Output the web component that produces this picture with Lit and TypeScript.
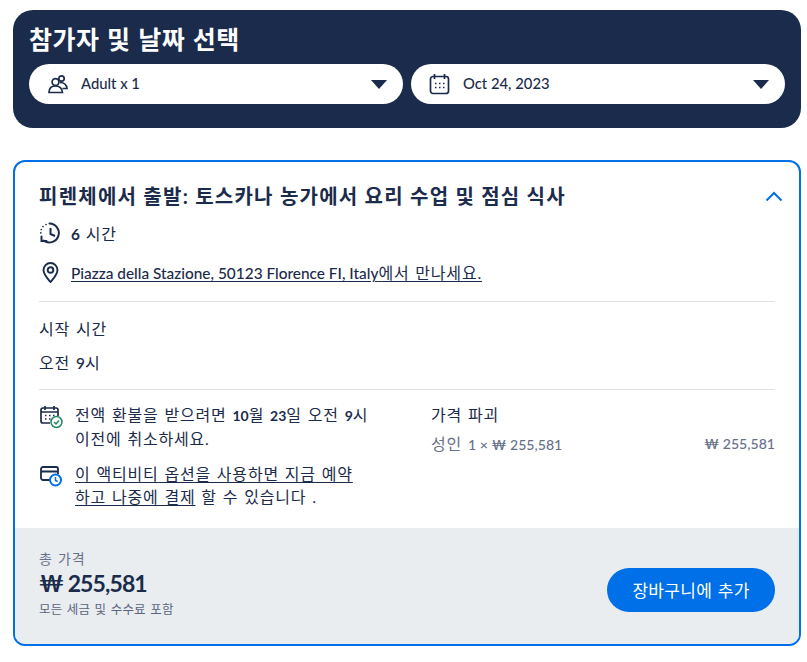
import { LitElement, html, css } from "lit";
import { customElement } from "lit/decorators.js";

const caret = html`<svg class="caret" width="16" height="9" viewBox="0 0 16 9"><path d="M0 0h16L8 9z" fill="#1b2b4b"/></svg>`;

@customElement("app-root")
export class AppRoot extends LitElement {
  static styles = css`
    :host { display: block; width: 807px; height: 662px; background: #fff; font-family: Lato, "Noto Sans CJK KR", sans-serif; color: #1b2b4b; font-size: 16px; letter-spacing: 0.8px; word-spacing: 1px; overflow: hidden; }
    .en { font-size: 15.4px; letter-spacing: 0; word-spacing: 0; font-weight: 500; }
    .wrap { padding: 10px 6px 0 13px; }
    .head { background: #1b2b4b; border-radius: 20px; height: 118px; box-sizing: border-box; padding: 12px 16px 0 16px; }
    .head h2 { margin: 0; font-size: 25px; line-height: 34px; height: 42px; font-weight: 700; color: #fff; letter-spacing: 0.5px; word-spacing: 1px; }
    .pills { display: flex; gap: 8px; }
    .pill { flex: 1; height: 40px; background: #fff; border-radius: 20px; display: flex; align-items: center; padding: 0 16px 0 18px; }
    .pill span { flex: 1; margin: 0 0 2px 12px; font-size: 14.8px; }
    .pill svg.ic { flex: none; }
    .card { margin-top: 32px; height: 486px; width: 788px; box-sizing: border-box; border: 2px solid #0070e8; border-radius: 12px; overflow: hidden; display: flex; flex-direction: column; }
    .body { flex: 1; padding: 0 24px; }
    .title { display: flex; justify-content: space-between; align-items: center; height: 68px; }
    .title h3 { margin: 0; font-size: 20px; font-weight: 700; line-height: 28px; letter-spacing: 1.25px; word-spacing: 0; }
    .title svg { margin-right: -8px; }
    .row { display: flex; align-items: center; gap: 11px; height: 24px; }
    .row.dur { margin-top: -9px; }
    .row.loc { margin-top: 15px; }
    .row a, .link { color: inherit; text-decoration: underline; text-underline-offset: 2px; }
    hr { border: 0; border-top: 1px solid #dfe2e6; margin: 0; }
    .hr1 { margin-top: 17px; }
    .start { height: 87px; box-sizing: border-box; padding-top: 15px; line-height: 24px; }
    .start p { margin: 0 0 10px; }
    .cols { display: flex; padding-top: 13px; }
    .left { width: 392px; }
    .right { flex: 1; }
    .note { display: flex; gap: 11px; line-height: 23px; }
    .note + .note { margin-top: 12px; }
    .note svg { flex: none; margin-top: 2px; }
    .note p { margin: 0; white-space: nowrap; }
    .note .en { font-size: 14px; font-weight: 700; }
    .break { line-height: 24px; }
    .line { display: flex; justify-content: space-between; line-height: 24px; margin-top: 5px; color: #68718a; }
    .line .en { font-size: 14.1px; }
    b { font-weight: 700; }
    .foot { height: 116px; background: #e9edf0; display: flex; justify-content: space-between; align-items: center; padding: 0 24px; }
    .sum { padding-bottom: 2px; }
    .lab { font-size: 14px; color: #68718a; line-height: 18px; }
    .total { font-size: 23px; font-weight: 700; line-height: 31px; letter-spacing: -0.9px; word-spacing: 0; }
    .tiny { font-size: 12.5px; color: #5c6580; line-height: 20px; margin-top: 1px; letter-spacing: 0.2px; }
    button { border: 0; width: 168px; height: 44px; border-radius: 22px; background: #0070e8; color: #fff; font: inherit; font-size: 17px; letter-spacing: 0.3px; word-spacing: 1px; margin-top: 7px; }
  `;

  render() {
    return html`<div class="wrap">
      <div class="head">
        <h2>참가자 및 날짜 선택</h2>
        <div class="pills">
          <div class="pill">
            <svg class="ic" width="22" height="20" viewBox="0 0 22 20" fill="none" stroke="#1b2b4b" stroke-width="1.7"><circle cx="8.500" cy="8" r="3.400"/><circle cx="14.500" cy="4.500" r="2.700"/><path d="M2 18.500c0-4.500 3-6.500 6.500-6.500s6.500 2 7 6.500zM13 8.500c4 0 6.500 2 7 6h-4.500"/></svg>
            <span class="en">Adult x 1</span>${caret}
          </div>
          <div class="pill">
            <svg class="ic" width="22" height="22" viewBox="0 0 22 22" fill="none" stroke="#1b2b4b" stroke-width="1.7"><rect x="1.500" y="3.500" width="18" height="17" rx="2.500"/><path d="M5.500 1V6M15.500 1V6"/><path d="M6 10.500h1.500M10 10.500h1.500M14 10.500h1.500M6 14.500h1.500M10 14.500h1.500M14 14.500h1.500" stroke-width="1.600"/></svg>
            <span class="en">Oct 24, 2023</span>${caret}
          </div>
        </div>
      </div>
      <div class="card">
        <div class="body">
          <div class="title">
            <h3>피렌체에서 출발: 토스카나 농가에서 요리 수업 및 점심 식사</h3>
            <svg width="18" height="11" viewBox="0 0 18 11" fill="none" stroke="#0070e8" stroke-width="2"><path d="M1.500 9.500L9 2l7.500 7.500"/></svg>
          </div>
          <div class="row dur">
            <svg width="22" height="22" viewBox="0 0 22 22" fill="none" stroke="#1b2b4b" stroke-width="2" stroke-linecap="round" style="margin-right:-1px"><path d="M10.500 1.500a9.500 9.500 0 1 1-6 17"/><path d="M11.500 6v6l4.500 2" stroke-linecap="butt"/><path d="M2.500 14.500v4.500h5"/><path d="M7 2.500h.01M4 4.500h.01M2.300 7.500h.01M1.800 10.800h.01" stroke-width="1.700"/></svg>
            <span><span class="en"><b>6</b></span> 시간</span>
          </div>
          <div class="row loc">
            <svg width="21" height="21" viewBox="0 0 21 21" fill="none" stroke="#1b2b4b" stroke-width="1.900" style="margin-left:1px;margin-right:-1px"><path d="M10.500 20c-3-3.500-7-7.500-7-12a7 7 0 0 1 14 0c0 4.500-4 8.500-7 12z"/><circle cx="10.500" cy="8" r="2.800"/></svg>
            <span><a href="#"><span class="en">Piazza della Stazione, 50123 Florence FI, Italy</span>에서 만나세요.</a></span>
          </div>
          <hr class="hr1" />
          <div class="start"><p>시작 시간</p><p>오전 <b class="en">9</b>시</p></div>
          <hr />
          <div class="cols">
            <div class="left">
              <div class="note">
                <svg width="25" height="25" viewBox="0 0 25 25" fill="none" stroke="#1b2b4b" stroke-width="1.700"><path d="M11 18H4a2 2 0 0 1-2-2V5a2 2 0 0 1 2-2h13a2 2 0 0 1 2 2v6"/><path d="M6 1v4M15 1v4M2 7h17"/><path d="M6 10.500h1.500M10 10.500h1.500M14 10.500h1.500M6 14h1.500M10 14h1.500" stroke-width="1.400"/><circle cx="17.500" cy="17" r="5.500" fill="#fff" stroke="#1f8a5f" stroke-width="1.500"/><path d="M15 17l2 2 3-3.500" stroke="#1f8a5f" stroke-width="1.500"/></svg>
                <p>전액 환불을 받으려면 <b class="en">10</b>월 <b class="en">23</b>일 오전 <b class="en">9</b>시<br />이전에 취소하세요.</p>
              </div>
              <div class="note">
                <svg width="25" height="25" viewBox="0 0 25 25" fill="none" stroke="#1b2b4b" stroke-width="1.800"><path d="M11 16H4a2 2 0 0 1-2-2V5a2 2 0 0 1 2-2h13a2 2 0 0 1 2 2v5M2 7.500h17"/><circle cx="16.500" cy="16" r="5.500" fill="#fff" stroke="#0070e8" stroke-width="2"/><path d="M16.500 13v3.500l2.200 1" stroke="#0070e8" stroke-width="1.500"/></svg>
                <p><span class="link">이 액티비티 옵션을 사용하면 지금 예약<br />하고 나중에 결제</span> 할 수 있습니다 .</p>
              </div>
            </div>
            <div class="right">
              <div class="break">가격 파괴</div>
              <div class="line"><span>성인 <span class="en">1 × ₩ 255,581</span></span><span class="en">₩ 255,581</span></div>
            </div>
          </div>
        </div>
        <div class="foot">
          <div class="sum">
            <div class="lab">총 가격</div>
            <div class="total">₩ 255,581</div>
            <div class="tiny">모든 세금 및 수수료 포함</div>
          </div>
          <button>장바구니에 추가</button>
        </div>
      </div>
    </div>`;
  }
}
